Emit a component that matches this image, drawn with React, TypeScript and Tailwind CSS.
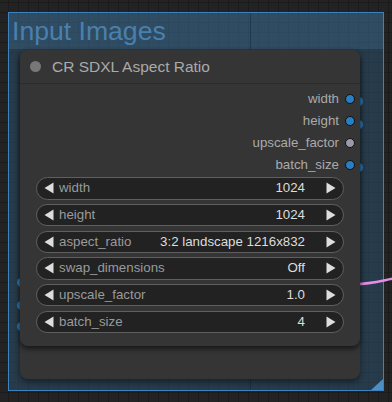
import React from 'react';

const font = { fontFamily: '"Liberation Sans", Arial, sans-serif' };

type Output = { name: string; color: string };

const outputs: Output[] = [
  { name: 'width', color: 'bg-[#2a7fc2]' },
  { name: 'height', color: 'bg-[#2a7fc2]' },
  { name: 'upscale_factor', color: 'bg-[#9a99a8]' },
  { name: 'batch_size', color: 'bg-[#2a7fc2]' },
];

const widgets = [
  { label: 'width', value: '1024' },
  { label: 'height', value: '1024' },
  { label: 'aspect_ratio', value: '3:2 landscape 1216x832' },
  { label: 'swap_dimensions', value: 'Off' },
  { label: 'upscale_factor', value: '1.0' },
  { label: 'batch_size', value: '4' },
];

const Arrow = ({ dir }: { dir: 'left' | 'right' }) => (
  <svg width="10" height="12" viewBox="0 0 10 12" className="shrink-0">
    {dir === 'left' ? (
      <polygon points="9.5,0.5 9.5,11.5 0.5,6" fill="#dddddd" />
    ) : (
      <polygon points="0.5,0.5 0.5,11.5 9.5,6" fill="#dddddd" />
    )}
  </svg>
);

const Widget = ({ label, value }: { label: string; value: string }) => (
  <div className="flex h-[22.3px] items-center rounded-full border border-[#5f5f5f] bg-[#222222] pl-[7px] pr-[7px] text-[13.3px]">
    <Arrow dir="left" />
    <span className="ml-[5px] text-[#9a9a9a]">{label}</span>
    <span className="ml-auto mr-[21px] text-[#dddddd]">{value}</span>
    <Arrow dir="right" />
  </div>
);

const Dot = ({ className }: { className: string }) => (
  <div className={`absolute h-[9px] w-[9px] rounded-full bg-[#2a7fc2] ${className}`} />
);

export default function App() {
  return (
    <div
      className="relative h-[402px] w-[392px] overflow-hidden bg-[#232323] bg-[linear-gradient(to_right,#1b1b1b_1px,transparent_1px),linear-gradient(to_bottom,#1b1b1b_1px,transparent_1px)] bg-[size:10px_10px] bg-[position:8px_2px]"
      style={font}
    >
      {/* group */}
      <div className="absolute left-[8px] top-[12px] flex h-[379px] w-[376px] flex-col border border-[#3b82be]">
        <div className="flex h-[36px] items-center bg-[rgba(60,118,164,0.5)] pl-[3px] text-[26.6px] leading-none text-[#4a80ac]">
          Input Images
        </div>
        <div className="flex-1 bg-[rgba(46,84,116,0.5)]" />
        <svg width="12" height="11" viewBox="0 0 12 11" className="absolute bottom-0 right-0">
          <polygon points="12,0 12,11 0,11" fill="#4b8fc4" />
        </svg>
      </div>
      <div className="absolute left-[250px] top-[13px] h-[377px] w-px bg-[rgba(10,25,45,0.35)]" />

      {/* slots of nodes behind */}
      <Dot className="left-[17px] top-[278px]" />
      <Dot className="left-[17px] top-[301px]" />
      <Dot className="left-[17px] top-[322px]" />
      <Dot className="left-[354px] top-[97px]" />
      <Dot className="left-[354px] top-[120px]" />
      <Dot className="left-[354px] top-[163px]" />

      {/* wire */}
      <svg width="40" height="20" viewBox="0 0 40 20" className="absolute left-[356px] top-[274px]">
        <path d="M0 10 C 14 10, 24 7, 40 4" stroke="#e58ee8" strokeWidth="2.6" fill="none" />
      </svg>

      {/* back node */}
      <div className="absolute left-[20px] top-[50px] h-[329px] w-[340px] rounded-[8px] bg-[#353535] shadow-[0_3px_6px_rgba(0,0,0,0.45)]" />

      {/* front node */}
      <div className="absolute left-[20px] top-[50px] flex h-[296px] w-[340px] flex-col rounded-[8px] bg-[#353535] shadow-[0_3px_5px_rgba(0,0,0,0.55)]">
        <div className="flex h-[33.5px] items-center border-b border-[#2b2b2b] pl-[10px]">
          <div className="h-[11px] w-[11px] rounded-full bg-[#777777]" />
          <span className="ml-[11px] text-[15.5px] text-[#aaaaaa]">CR SDXL Aspect Ratio</span>
        </div>
        <div className="flex flex-col items-end pr-[5px] pt-[4px]">
          {outputs.map(o => (
            <div key={o.name} className="flex h-[22.2px] items-center gap-[6px] text-[13.3px] text-[#aaaaaa]">
              <span>{o.name}</span>
              <div className={`h-[10px] w-[10px] rounded-full border-[1.5px] border-[#111111] ${o.color}`} />
            </div>
          ))}
        </div>
        <div className="mt-[1px] flex flex-col gap-[4.4px] px-[16px]">
          {widgets.map(w => (
            <Widget key={w.label} label={w.label} value={w.value} />
          ))}
        </div>
      </div>
    </div>
  );
}
